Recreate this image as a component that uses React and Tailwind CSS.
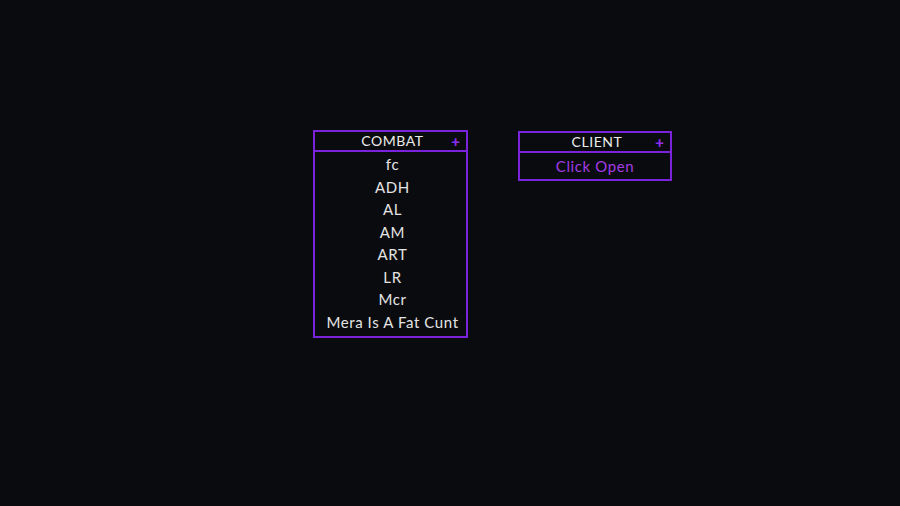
const combat = ["fc", "ADH", "AL", "AM", "ART", "LR", "Mcr", "Mera Is A Fat Cunt"];

function Header({ title }) {
    return (
        <div className="relative flex h-[20px] items-center justify-center border-b-2 border-[#7a22dc]">
            <span className="pl-[4px] text-[14px] leading-none tracking-[0.04em] text-[#ececec]">{title}</span>
            <span className="absolute right-[6px] top-[1px] text-[15px] font-black leading-[16px] text-[#8b2cf0]">+</span>
        </div>
    );
}

export default function App() {
    return (
        <div
            className="flex h-[506px] w-[900px] items-start gap-[50px] bg-[#0a0b0e] pl-[313px] pt-[130px]"
            style={{ fontFamily: "Lato, 'Noto Sans', sans-serif" }}
        >
            <div className="w-[155px] border-2 border-[#7a22dc]">
                <Header title="COMBAT" />
                <div className="flex flex-col pb-[3px] pt-[1px]">
                    {combat.map((m) => (
                        <div
                            key={m}
                            className="flex h-[22.5px] items-center justify-center pl-[4px] text-[15px] tracking-[0.04em] text-[#e4e4e4]"
                        >
                            {m}
                        </div>
                    ))}
                </div>
            </div>
            <div className="mt-[1px] w-[154px] border-2 border-[#7a22dc]">
                <Header title="CLIENT" />
                <div className="flex h-[26px] items-center justify-center text-[15px] tracking-[0.04em] text-[#a33be6]">
                    Click Open
                </div>
            </div>
        </div>
    );
}
